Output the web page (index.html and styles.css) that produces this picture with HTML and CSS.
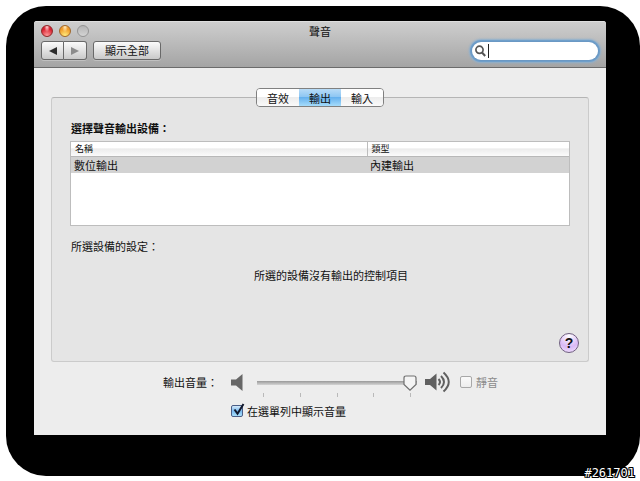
FILE: index.html
```html
<!DOCTYPE html>
<html lang="zh-Hant">
<head>
<meta charset="utf-8">
<title>聲音</title>
<link rel="stylesheet" href="styles.css">
</head>
<body>
<div class="backdrop">
  <main class="window">
    <header class="titlebar">
      <div class="title-row">
        <div class="lights">
          <button class="light light-close" type="button" aria-label="關閉"></button>
          <button class="light light-min" type="button" aria-label="縮到最小"></button>
          <button class="light light-zoom" type="button" aria-label="縮放" disabled></button>
        </div>
        <h1 class="title">聲音</h1>
      </div>
      <div class="toolbar">
        <div class="nav">
          <button class="nav-btn" type="button" aria-label="上一頁"><svg width="8" height="8" viewBox="0 0 8 8"><path d="M8 0v8L0 4z" fill="#2c2c2c"/></svg></button>
          <button class="nav-btn" type="button" aria-label="下一頁" disabled><svg width="8" height="8" viewBox="0 0 8 8"><path d="M0 0v8l8-4z" fill="#8c8c8c"/></svg></button>
        </div>
        <button class="show-all" type="button">顯示全部</button>
        <label class="search">
          <svg width="11" height="12" viewBox="0 0 11 12" fill="none" stroke="#555"><circle cx="4.5" cy="4.8" r="3.6" stroke-width="1.7"/><path d="M7 7.6l3.2 3.3" stroke-width="2.1"/></svg>
          <span class="caret"></span>
          <input class="search-input" type="search" aria-label="搜尋">
        </label>
      </div>
    </header>

    <div class="content">
      <div class="tabs" role="tablist">
        <button class="tab" type="button" role="tab">音效</button>
        <button class="tab tab-active" type="button" role="tab" aria-selected="true">輸出</button>
        <button class="tab" type="button" role="tab">輸入</button>
      </div>

      <section class="panel">
        <h2 class="devices-title" id="devices">選擇聲音輸出設備：</h2>
        <div class="list">
          <table class="devices" aria-labelledby="devices">
            <thead><tr><th class="col-name">名稱</th><th class="col-type">類型</th></tr></thead>
            <tbody><tr><td>數位輸出</td><td>內建輸出</td></tr></tbody>
          </table>
        </div>
        <h2 class="settings-title">所選設備的設定：</h2>
        <p class="message">所選的設備沒有輸出的控制項目</p>
        <button class="help" type="button">?</button>
      </section>

      <div class="volume">
        <label class="volume-label" for="volume">輸出音量：</label>
        <svg class="speaker-low" width="12" height="17" viewBox="0 0 12 17"><path d="M0 5.5h5L11.5 0v17L5 11.500H0z" fill="#676767"/></svg>
        <div class="slider">
          <input class="range" id="volume" type="range" min="0" max="100" value="100">
          <div class="ticks"><i></i><i></i><i></i><i></i><i></i></div>
        </div>
        <svg class="speaker-high" width="26" height="22" viewBox="0 0 26 22"><path d="M0 8h5l6.500-5.500v17L5 14H0z" fill="#606060"/><g fill="none" stroke="#606060" stroke-width="2"><path d="M13.500 8q3 3 0 6"/><path d="M16 5q6 6 0 12"/><path d="M18.500 1.500q10.500 9.500 0 19"/></g></svg>
        <label class="mute"><input class="check" type="checkbox" disabled>靜音</label>
      </div>

      <label class="menu-option">
        <span class="check-wrap">
          <input class="check check-blue" type="checkbox" checked>
          <svg class="mark" width="14" height="14" viewBox="0 0 14 14"><path d="M3.500 6.500l3 4.200L12.500 1" fill="none" stroke="#10182c" stroke-width="2"/></svg>
        </span>
        在選單列中顯示音量
      </label>
    </div>
  </main>
</div>
<div class="stamp">#261701</div>
</body>
</html>
```
FILE: styles.css
```css
* {
  box-sizing: border-box;
}

body {
  margin: 0;
  padding: 6px 0 6px 6px;
  background: #fff;
  color: #111;
  font: 11px/16px "Noto Sans CJK TC", sans-serif;
}

button,
input {
  margin: 0;
  padding: 0;
  color: inherit;
  font: inherit;
}

h1,
h2,
p {
  margin: 0;
  font-size: 11px;
  font-weight: 400;
}

.backdrop {
  padding: 15px 34px 41px 28px;
  border-radius: 40px;
  background: #000;
}

.window {
  overflow: hidden;
  border-radius: 3px 3px 0 0;
  background: #ededed;
}

/* Title bar */
.titlebar {
  padding: 0 7px 7px;
  border-top: 1px solid #dedede;
  border-bottom: 1px solid #6b6b6b;
  background: linear-gradient(#cecece, #a4a4a4);
}

.title-row {
  display: grid;
  grid-template-columns: 1fr auto 1fr;
  align-items: center;
  height: 18px;
  margin-bottom: 1px;
}

.lights {
  display: flex;
  gap: 6px;
}

.light {
  width: 12px;
  height: 12px;
  border: 1px solid #8a8a8a;
  border-radius: 50%;
}

.light-close {
  border-color: #8f2929;
  background: radial-gradient(ellipse at 50% 10%, #ffd8d8 0, transparent 40%), radial-gradient(circle at 50% 95%, #ff9b9b, #d8202f 65%);
}

.light-min {
  border-color: #a1682a;
  background: radial-gradient(ellipse at 50% 10%, #fff0c8 0, transparent 40%), radial-gradient(circle at 50% 95%, #ffee80, #f09a28 65%);
}

.light-zoom {
  border-color: #949494;
  background: linear-gradient(#b4b4b4, #d4d4d4);
}

.toolbar {
  display: flex;
  align-items: center;
  gap: 6px;
}

.nav {
  display: flex;
}

.nav-btn,
.show-all {
  height: 19px;
  border: 1px solid #696969;
  background: linear-gradient(#fbfbfb, #c9c9c9);
  box-shadow: 0 1px 0 #c0c0c0;
}

.nav-btn {
  display: flex;
  align-items: center;
  justify-content: center;
  width: 23px;
  border-radius: 3px 0 0 3px;
}

.nav-btn + .nav-btn {
  border-left: 0;
  border-radius: 0 3px 3px 0;
}

.show-all {
  padding: 0 11px;
  border-radius: 3px;
  line-height: 17px;
}

.search {
  display: flex;
  align-items: center;
  width: 126px;
  height: 18px;
  margin: 0 1px 0 auto;
  padding: 0 8px 0 3px;
  border-radius: 9px;
  background: #fff;
  box-shadow: 0 0 0 1px #6a98c4, 0 0 0 2px #6f9fca, 0 0 2px 3px #8bafcf;
}

.caret {
  width: 1px;
  height: 14px;
  margin-left: 2px;
  background: #222;
}

.search-input {
  flex: 1;
  min-width: 0;
  border: 0;
  outline: 0;
  background: none;
}

/* Tabs */
.content {
  padding: 20px 17px 16px;
}

.tabs {
  position: relative;
  display: flex;
  width: max-content;
  margin: 0 auto -10px;
  overflow: hidden;
  border: 1px solid #808080;
  border-radius: 4px;
}

.tab {
  width: 42px;
  height: 17px;
  border: 0;
  background: linear-gradient(#fff 0 45%, #ededed 50%, #fafafa);
  line-height: 16px;
}

.tab-active {
  background: linear-gradient(#b9dcf7, #8fc7f3 45%, #66b1ee 50%, #a6dcfb);
}

/* Panel */
.panel {
  padding: 22px 19px 8px;
  border: 1px solid #cbcbcb;
  border-top-color: #b5b5b5;
  border-radius: 3px;
  background: #e5e5e5;
}

.devices-title {
  margin-bottom: 5px;
  font-weight: 700;
}

.list {
  min-height: 85px;
  margin: 0 -1px;
  border: 1px solid #bdbdbd;
  background: #fff;
}

.devices {
  width: 100%;
  border-collapse: collapse;
  table-layout: fixed;
}

.devices th {
  height: 14px;
  padding: 0 4px;
  border-bottom: 1px solid #b8b8b8;
  background: linear-gradient(#fff 0 40%, #ececec 50%, #fbfbfb);
  font-size: 9px;
  font-weight: 400;
  line-height: 13px;
  text-align: left;
}

.devices .col-name {
  width: 296px;
}

.devices .col-type {
  border-left: 1px solid #bdbdbd;
}

.devices td {
  padding: 0 3px;
  background: #d2d2d2;
}

.settings-title {
  margin-top: 12px;
}

.message {
  margin-top: 13px;
  padding-left: 22px;
  text-align: center;
}

.help {
  display: block;
  width: 20px;
  height: 20px;
  margin: 50px -10px 0 auto;
  border: 1px solid #706080;
  border-radius: 50%;
  background: radial-gradient(circle at 50% 10%, #fff, #d9b9f5 60%, #f5e6ff);
  font: 700 14px/18px "Liberation Sans", sans-serif;
}

/* Volume */
.volume {
  display: flex;
  align-items: center;
  height: 28px;
  margin: 6px 91px 0 112px;
}

.speaker-low {
  margin: 0 14px 0 13px;
}

.slider {
  flex: 1;
  padding-top: 8px;
}

.range {
  display: block;
  width: 100%;
  height: 16px;
  appearance: none;
  background: linear-gradient(#999, #d4d4d4) center / 100% 4px no-repeat;
}

.range::-webkit-slider-thumb {
  width: 14px;
  height: 16px;
  appearance: none;
  background: url("data:image/svg+xml,%3Csvg xmlns='http://www.w3.org/2000/svg' viewBox='0 0 14 16'%3E%3Cpath d='M3 1h8q2 0 2 2v6.500L7 15.200 1 9.500V3q0-2 2-2z' fill='%23f4f4f4' stroke='%23707070' stroke-width='1.200'/%3E%3C/svg%3E");
}

.ticks {
  display: flex;
  justify-content: space-between;
  height: 4px;
  margin: 2px 6px 0;
}

.ticks i {
  width: 1px;
  background: #b9b9b9;
}

.speaker-high {
  margin: 0 9px 0 8px;
}

.mute,
.menu-option {
  display: flex;
  align-items: center;
  gap: 4px;
}

.mute {
  color: #8b8b8b;
}

.check {
  display: block;
  width: 12px;
  height: 12px;
  appearance: none;
  border: 1px solid #a8a8a8;
  border-radius: 2px;
  background: linear-gradient(#fafafa, #ededed);
}

.check-blue {
  border-color: #4a5d86;
  background: linear-gradient(#d5eafa, #78b8ee 50%, #a9e0fc);
}

.menu-option {
  width: max-content;
  margin: 7px 0 0 180px;
}

.check-wrap {
  position: relative;
}

.mark {
  position: absolute;
  top: -2px;
  left: 0;
}

/* Corner number laid over the backdrop */
.stamp {
  position: absolute;
  right: 5px;
  bottom: 0;
  color: #fff;
  font: 12px/16px "DejaVu Sans Mono", monospace;
  text-shadow: 1px 0 #000, -1px 0 #000, 0 1px #000, 0 -1px #000, 1px 1px #000, -1px -1px #000, 1px -1px #000, -1px 1px #000;
}
```
